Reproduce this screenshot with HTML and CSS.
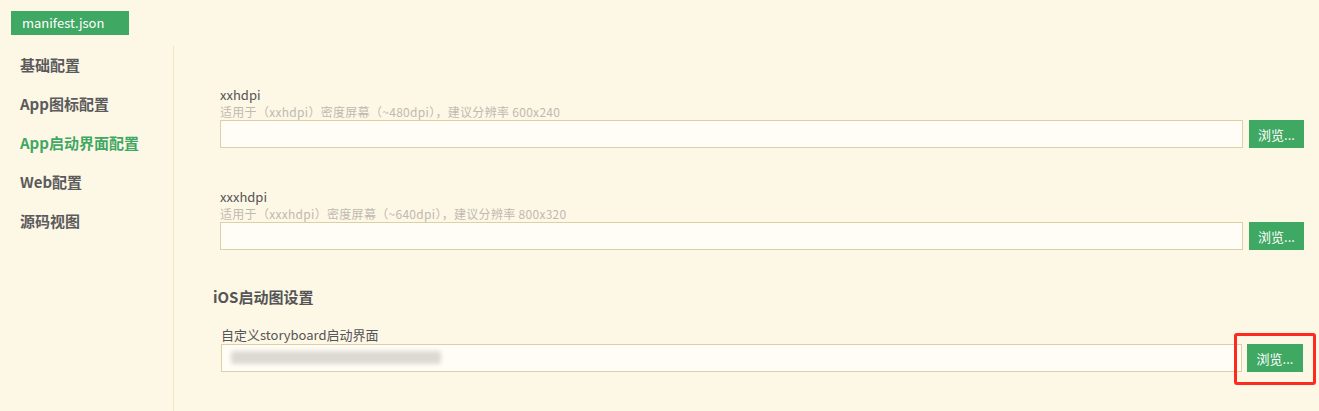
FILE: index.html
```html
<!DOCTYPE html>
<html lang="zh-CN">
<head>
<meta charset="utf-8">
<title>manifest.json</title>
<link rel="stylesheet" href="styles.css">
</head>
<body>
<div class="tabbar">
  <div class="tab">manifest.json</div>
</div>
<div class="main">
  <nav class="sidebar">
    <div class="nav-item">基础配置</div>
    <div class="nav-item">App图标配置</div>
    <div class="nav-item active">App启动界面配置</div>
    <div class="nav-item">Web配置</div>
    <div class="nav-item">源码视图</div>
  </nav>
  <section class="content">
    <div class="field">
      <div class="label">xxhdpi</div>
      <div class="hint">适用于（xxhdpi）密度屏幕（~480dpi），建议分辨率 600x240</div>
      <div class="row">
        <div class="input"></div>
        <button class="btn">浏览...</button>
      </div>
    </div>
    <div class="field second">
      <div class="label">xxxhdpi</div>
      <div class="hint">适用于（xxxhdpi）密度屏幕（~640dpi），建议分辨率 800x320</div>
      <div class="row">
        <div class="input"></div>
        <button class="btn">浏览...</button>
      </div>
    </div>
    <h3 class="heading">iOS启动图设置</h3>
    <div class="field ios">
      <div class="label dark">自定义storyboard启动界面</div>
      <div class="row ios-row">
        <div class="input"><span class="blurred"></span></div>
        <div class="btn-wrap">
          <button class="btn">浏览...</button>
          <span class="highlight"></span>
        </div>
      </div>
    </div>
  </section>
</div>
</body>
</html>
```

FILE: styles.css
```css
html, body {
  margin: 0;
  padding: 0;
  background: #fdf7e6;
  font-family: "Microsoft YaHei", "Noto Sans CJK SC", sans-serif;
  height: 100%;
  overflow: hidden;
}

.tabbar {
  padding: 11px 0 0 11px;
  height: 35px;
  box-sizing: border-box;
}

.tab {
  width: 118px;
  height: 24px;
  background: #3fa862;
  color: #fff;
  font-size: 13px;
  line-height: 24px;
  padding-left: 11px;
  box-sizing: border-box;
}

.main {
  display: flex;
  margin-top: 11px;
  height: 365px;
}

.sidebar {
  width: 174px;
  border-right: 1px solid #efe5c6;
  box-sizing: border-box;
  flex-shrink: 0;
}

.nav-item {
  height: 39px;
  line-height: 37px;
  padding-left: 20px;
  font-size: 15px;
  font-weight: bold;
  color: #5b5b5b;
}

.nav-item.active {
  color: #3fa862;
}

.content {
  flex: 1;
  padding: 40px 15px 0 46px;
}

.field .label {
  font-size: 13px;
  line-height: 17px;
  color: #555;
}

.hint {
  font-size: 12px;
  line-height: 17px;
  color: #bfbab0;
  letter-spacing: 0.3px;
}

.row {
  display: flex;
  gap: 6px;
  height: 28px;
}

.input {
  flex: 1;
  height: 28px;
  box-sizing: border-box;
  border: 1px solid #ddd0a6;
  background: #fffdf6;
  position: relative;
}

.btn {
  width: 55px;
  height: 28px;
  border: none;
  background: #3fa862;
  color: #fff;
  font-family: "Microsoft YaHei", "Noto Sans CJK SC", sans-serif;
  font-size: 13px;
  padding: 0;
  cursor: pointer;
}

.field.second {
  margin-top: 40px;
}

.heading {
  margin: 38px 0 0 -7px;
  font-size: 15px;
  line-height: 18px;
  font-weight: bold;
  color: #555;
}

.field.ios {
  margin-top: 20px;
  padding-left: 1px;
}

.ios-row {
  gap: 5px;
  padding-right: 1px;
  margin-top: 1px;
}

.btn-wrap {
  position: relative;
  width: 56px;
  height: 28px;
}

.btn-wrap .btn {
  width: 56px;
}

.highlight {
  position: absolute;
  left: -13px;
  top: -11px;
  width: 82px;
  height: 52px;
  box-sizing: border-box;
  border: 3px solid #ff2a1f;
  border-radius: 3px;
  pointer-events: none;
}

.blurred {
  position: absolute;
  left: 9px;
  top: 6px;
  width: 210px;
  height: 13px;
  background: #ddd9d1;
  filter: blur(2px);
  border-radius: 3px;
}
```
